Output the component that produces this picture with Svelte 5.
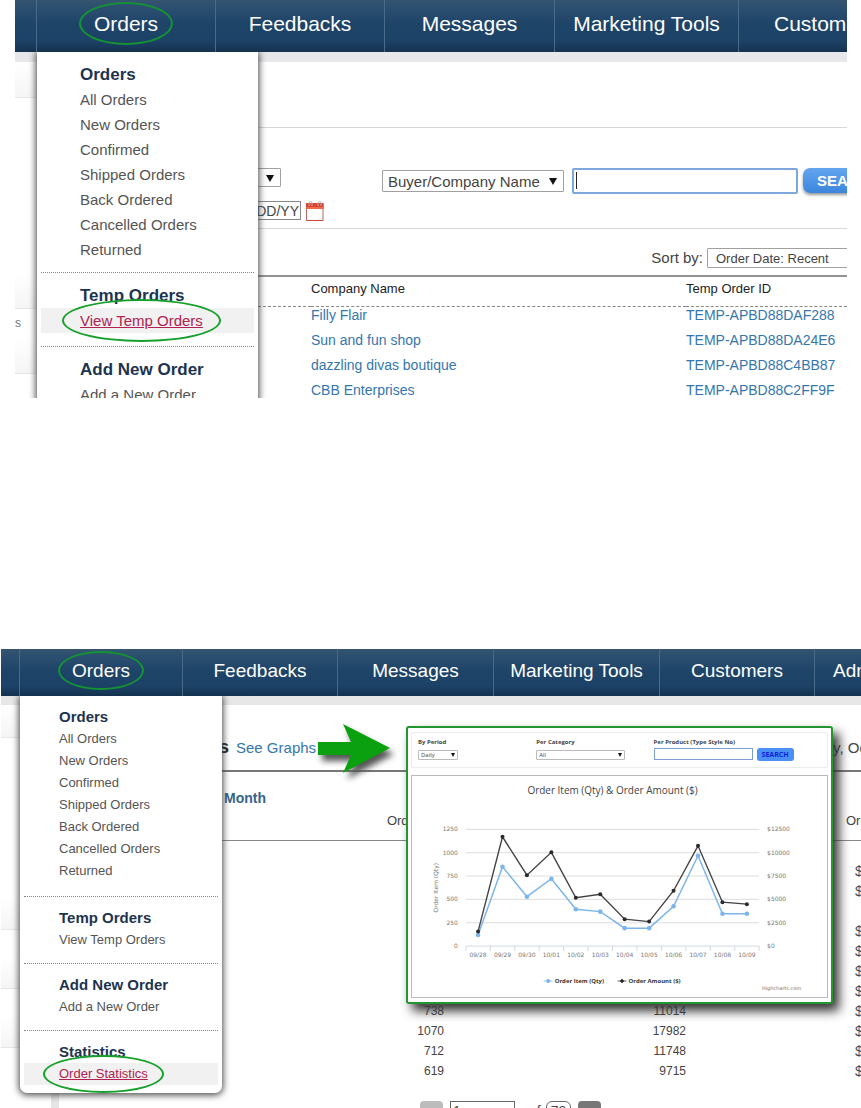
<script>
	const orderLinks = ["All Orders", "New Orders", "Confirmed", "Shipped Orders", "Back Ordered", "Cancelled Orders", "Returned"];

	const tempMenu = [
		{ title: "Orders", links: orderLinks },
		{ title: "Temp Orders", links: ["View Temp Orders"] },
		{ title: "Add New Order", links: ["Add a New Order"] },
	];
	const statsMenu = [...tempMenu, { title: "Statistics", links: ["Order Statistics"] }];

	const tempOrders = [
		{ company: "Filly Flair", id: "TEMP-APBD88DAF288" },
		{ company: "Sun and fun shop", id: "TEMP-APBD88DA24E6" },
		{ company: "dazzling divas boutique", id: "TEMP-APBD88C4BB87" },
		{ company: "CBB Enterprises", id: "TEMP-APBD88C2FF9F" },
	];

	const stats = [
		["", "", "$"],
		["", "", "$"],
		["", "", ""],
		["", "", "$"],
		["", "", "$"],
		["", "", "$"],
		["", "", "$"],
		["738", "11014", "$"],
		["1070", "17982", "$"],
		["712", "11748", "$"],
		["619", "9715", "$"],
	];

	const days = ["09/28", "09/29", "09/30", "10/01", "10/02", "10/03", "10/04", "10/05", "10/06", "10/07", "10/08", "10/09"];
	const qty = [118, 850, 529, 721, 395, 369, 192, 192, 427, 967, 347, 347];
	const amount = [1550, 11700, 7590, 10040, 5180, 5550, 2880, 2620, 5930, 10740, 4700, 4490];
	const steps = [0, 1, 2, 3, 4, 5];

	const gridX = (i) => 54 + i * 24.5;
	const pointX = (i) => gridX(i) + 12.2;
	const valueY = (v) => 170.5 - (v / 250) * 23.4;
	const line = (values) => values.map((v, i) => `${pointX(i)},${valueY(v)}`).join(" ");
</script>

{#snippet nav(items)}
	<nav class="nav">
		<span></span>
		{#each items as item, i}
			<a href="#{item}"><span class:ring={i === 0}>{item}</span></a>
		{/each}
	</nav>
{/snippet}

{#snippet menu(groups, active)}
	<div class="menu">
		{#each groups as group}
			<section>
				<h3>{group.title}</h3>
				<ul>
					{#each group.links as link}
						<li class:active={link === active}>
							<a href="#{link}" class:ring={link === active}>{link}</a>
						</li>
					{/each}
				</ul>
			</section>
		{/each}
	</div>
{/snippet}

<main>
	<div class="screen temp">
		{@render nav(["Orders", "Feedbacks", "Messages", "Marketing Tools", "Customers"])}
		<div class="shell">
			<aside>
				<div class="tab"></div>
				<div class="space"></div>
				<div class="tab"></div>
				<div class="entry">s</div>
				<div class="tab"></div>
			</aside>
			<div class="content">
				<div class="blank"></div>
				<form class="search">
					<div class="filters">
						<span class="pick small"><select aria-label="Period"><option></option></select></span>
						<div class="date">
							<input type="text" aria-label="Date" value="MM/DD/YY" />
							<svg width="18" height="20" viewBox="0 0 18 20" aria-hidden="true">
								<rect x="0.5" y="3" width="16.5" height="16.5" fill="#fff" stroke="#b56a62" />
								<rect x="0" y="2" width="17.5" height="6" fill="#dc4330" />
								<rect x="0" y="6" width="17.5" height="2" fill="#ef6b4d" />
								<path d="M3 5V2a1.500 1.500 0 0 1 3 0V5M12 5V2a1.500 1.500 0 0 1 3 0V5" fill="none" stroke="#b4b4b4" />
								<path d="M1 19.5h16" stroke="#d0453a" />
							</svg>
						</div>
					</div>
					<div class="query">
						<span class="pick"><select aria-label="Search field"><option>Buyer/Company Name</option></select></span>
						<input type="text" aria-label="Search text" />
						<button type="button">SEARCH</button>
					</div>
				</form>
				<div class="sort">
					<label for="sort">Sort by:</label>
					<select id="sort"><option>Order Date: Recent</option></select>
				</div>
				<table>
					<colgroup><col class="lead" /><col class="company" /><col /></colgroup>
					<thead>
						<tr><th></th><th>Company Name</th><th>Temp Order ID</th></tr>
					</thead>
					<tbody>
						{#each tempOrders as order}
							<tr>
								<td></td>
								<td><a href="#{order.id}">{order.company}</a></td>
								<td><a href="#{order.id}">{order.id}</a></td>
							</tr>
						{/each}
					</tbody>
				</table>
			</div>
		</div>
		{@render menu(tempMenu, "View Temp Orders")}
	</div>

	<div class="screen stats">
		{@render nav(["Orders", "Feedbacks", "Messages", "Marketing Tools", "Customers", "Admin"])}
		<div class="shell">
			<aside>
				<div class="tab"></div>
				<div class="space"></div>
				<div class="tab"></div>
				<div class="entry"></div>
				<div class="tab"></div>
				<div class="entry"></div>
				<div class="tab"></div>
			</aside>
			<div class="content">
				<header>
					<h2>s</h2>
					<a href="#graphs">See Graphs</a>
					<time>y, Oct</time>
				</header>
				<h4>Month</h4>
				<table>
					<colgroup><col class="qty" /><col class="total" /><col /></colgroup>
					<thead>
						<tr><th>Order Qty</th><th></th><th>Order</th></tr>
					</thead>
					<tbody>
						{#each stats as row}
							<tr>
								{#each row as cell}
									<td>{cell}</td>
								{/each}
							</tr>
						{/each}
					</tbody>
				</table>
				<div class="pager">
					<button type="button" class="prev" aria-label="Previous page">◀</button>
					<input type="text" aria-label="Page" value="1" />
					<span class="of">of</span>
					<span class="pages">78</span>
					<button type="button" class="next" aria-label="Next page">▶</button>
				</div>
			</div>
		</div>
		{@render menu(statsMenu, "Order Statistics")}

		<svg class="arrow" width="90" height="70" viewBox="0 0 90 70" aria-hidden="true">
			<path d="M0 18H33L25 0L72 24L25 49L33 31H0Z" fill="#0aa00f" />
		</svg>

		<div class="card">
			<form class="bar">
				<div>
					<label for="period">By Period</label>
					<span class="pick period"><select id="period"><option>Daily</option></select></span>
				</div>
				<div>
					<label for="category">Per Category</label>
					<span class="pick category"><select id="category"><option>All</option></select></span>
				</div>
				<div>
					<label for="product">Per Product (Type Style No)</label>
					<div class="product">
						<input id="product" type="text" />
						<button type="button">SEARCH</button>
					</div>
				</div>
			</form>
			<div class="chart">
				<svg viewBox="0 0 416 222" role="img" aria-label="Order Item and Order Amount">
					<text class="title" x="201" y="18">Order Item (Qty) &amp; Order Amount ($)</text>
					{#each steps as s}
						<path d="M54 {valueY(s * 250)}H348" stroke={s ? "#d4d4d4" : "#c6cfdc"} />
						<text class="left" x="46" y={valueY(s * 250) + 2}>{s * 250}</text>
						<text class="right" x="356" y={valueY(s * 250) + 2}>${s * 2500}</text>
					{/each}
					{#each days as day, i}
						<path d="M{gridX(i)} 170.5v5" stroke="#c6cfdc" />
						<text class="day" x={pointX(i)} y="181">{day}</text>
					{/each}
					<path d="M348 170.5v5" stroke="#c6cfdc" />
					<text class="axis" transform="translate(26 112) rotate(-90)">Order Item (Qty)</text>

					<polyline points={line(qty)} fill="none" stroke="#7cb5ec" stroke-width="1.5" />
					{#each qty as v, i}
						<circle cx={pointX(i)} cy={valueY(v)} r="2.3" fill="#7cb5ec" />
					{/each}
					<polyline points={line(amount.map((v) => v / 10))} fill="none" stroke="#434348" stroke-width="1.4" />
					{#each amount as v, i}
						<circle cx={pointX(i)} cy={valueY(v / 10)} r="2" fill="#2a2a2e" />
					{/each}

					<path d="M132 205.5h9" stroke="#7cb5ec" />
					<circle cx="136.5" cy="205.5" r="2" fill="#7cb5ec" />
					<text class="legend" x="143" y="208">Order Item (Qty)</text>
					<path d="M206 205.5h9" stroke="#434348" />
					<path d="M210.5 203.3l2.2 2.2-2.2 2.2-2.2-2.2z" fill="#222" />
					<text class="legend" x="217" y="208">Order Amount ($)</text>
					<text class="credit" x="390" y="215">Highcharts.com</text>
				</svg>
			</div>
		</div>
	</div>
</main>

<style>
	:global(body) {
		background: #fff;
	}

	main {
		display: flex;
		flex-direction: column;
		height: 100vh;
		overflow: hidden;
		font-family: "Liberation Sans", Arial, sans-serif;
		color: #444;
	}

	.screen {
		position: relative;
		overflow: hidden;
	}

	.temp {
		--nav: 52px;
		--nav-font: 21px;
		--row: 25px;
		--title: 17px;
		--link: 15px;
		--indent: 39px;
		--ring: -9px -18px;
		--nav-ring: -10px -15px;
		flex: none;
		margin: 0 14px 251px 15px;
	}

	.stats {
		--nav: 47px;
		--nav-font: 19px;
		--row: 22px;
		--title: 15px;
		--link: 13px;
		--indent: 35px;
		--ring: -8px -16px;
		--nav-ring: -8px -14px;
		flex: 1;
		margin-left: 1px;
	}

	a {
		color: #3576ad;
		text-decoration: none;
	}

	h2,
	h3,
	h4,
	ul {
		margin: 0;
		padding: 0;
		list-style: none;
	}

	input,
	select,
	button {
		box-sizing: border-box;
		margin: 0;
		font-family: inherit;
		color: #444;
	}

	/* navigation */
	.nav {
		display: grid;
		height: var(--nav);
		background: linear-gradient(#35546f 0, #2a4e6f 18%, #1e4468 45%, #1d4267 78%, #14324f 100%);
	}

	.temp .nav {
		grid-template-columns: 21fr 179fr 169fr 170fr 184fr 109fr;
	}

	.stats .nav {
		grid-template-columns: 18fr 163fr 155fr 156fr 166fr 155fr 47fr;
	}

	.nav a {
		min-width: 0;
		border-left: 1px solid #4a6a89;
		color: #fff;
		font-size: var(--nav-font);
		line-height: calc(var(--nav) - 4px);
		text-align: center;
		white-space: nowrap;
	}

	.temp .nav a:last-child {
		padding-left: 35px;
		text-align: left;
	}

	.stats .nav a:last-child {
		padding-left: 18px;
		text-align: left;
	}

	.nav a span {
		display: inline-block;
		line-height: 23px;
	}

	.ring {
		position: relative;
	}

	.ring::after {
		content: "";
		position: absolute;
		inset: var(--ring);
		border: 2px solid #17a02c;
		border-radius: 50%;
	}

	.nav .ring::after {
		inset: var(--nav-ring);
		border-color: #149335;
	}

	/* drop-down menu */
	.menu {
		position: absolute;
		top: var(--nav);
		left: 22px;
		width: 213px;
		padding: 0 4px 8px;
		background: #fff;
		border-radius: 0 0 7px 7px;
		box-shadow: 0 1px 7px 1px #444;
		clip-path: inset(0 -20px -20px -20px);
	}

	.stats .menu {
		left: 19px;
		width: 194px;
		padding-bottom: 8px;
	}

	.menu section {
		padding: 10px 0 13px;
	}

	.menu section:first-child {
		padding-bottom: 10px;
	}

	.stats .menu section {
		padding-bottom: 12px;
	}

	.stats .menu section:first-child {
		padding-bottom: 14px;
	}

	.menu section:last-child,
	.stats .menu section:last-child {
		padding-bottom: 0;
	}

	.menu section + section {
		border-top: 1px dotted #888;
	}

	.menu h3 {
		padding-left: var(--indent);
		color: #1d3450;
		font-size: var(--title);
		line-height: var(--row);
	}

	.menu li {
		padding-left: var(--indent);
		font-size: var(--link);
		line-height: var(--row);
	}

	.menu a {
		display: inline-block;
		color: #555;
	}

	.menu .active {
		background: #f1f1f1;
	}

	.menu .active a {
		color: #b0224f;
		text-decoration: underline;
	}

	/* page frame */
	.shell {
		display: grid;
		grid-template-columns: 58px minmax(0, 1fr);
		border-top: 10px solid #e8e8ea;
	}

	.stats .shell {
		border-top-width: 9px;
		border-top-color: #e7e7e7;
	}

	aside {
		border-right: 8px solid #e6e6e6;
		font-size: 12px;
		color: #777;
	}

	.tab {
		height: 35px;
		border-bottom: 1px solid #e6e6e6;
		background: linear-gradient(#fff, #f5f5f5);
	}

	.space {
		height: 175px;
	}

	.entry {
		height: 29px;
		line-height: 29px;
	}

	.stats .tab {
		height: 32px;
	}

	.stats .space {
		height: 159px;
	}

	.stats .entry {
		height: 26px;
	}

	table {
		width: 100%;
		table-layout: fixed;
		border-collapse: separate;
		border-spacing: 0;
	}

	th,
	td {
		padding: 0;
		font-weight: normal;
		text-align: left;
		white-space: nowrap;
	}

	/* temp orders */
	.blank {
		height: 65px;
		border-bottom: 1px solid #d8d8d8;
	}

	.search {
		display: flex;
		gap: 58px;
		padding: 40px 0 7px 154px;
		border-bottom: 1px solid #d8d8d8;
	}

	.filters {
		display: grid;
		flex: none;
		gap: 14px;
	}

	.pick {
		position: relative;
		display: inline-block;
	}

	.pick::after {
		content: "";
		position: absolute;
		top: calc(50% - 3px);
		right: 7px;
		border: 4px solid transparent;
		border-top: 7px solid #111;
		border-bottom: 0;
		pointer-events: none;
	}

	select {
		appearance: none;
		height: 22px;
		padding: 0 5px;
		border: 1px solid #a0a0a0;
		border-radius: 1px;
		background: #fff;
		font-size: 15px;
	}

	.pick select {
		width: 100%;
	}

	.small {
		width: 54px;
		height: 19px;
	}

	.small select {
		display: block;
		height: 19px;
	}

	.date {
		display: flex;
		gap: 5px;
	}

	.date input {
		width: 74px;
		height: 19px;
		padding: 0 1px;
		border: 1px solid #888;
		font-size: 14px;
	}

	.query {
		display: flex;
		flex: 1;
		align-items: flex-start;
	}

	.query .pick {
		flex: none;
		width: 182px;
		margin: 2px 8px 0 0;
	}

	.query .pick select {
		display: block;
	}

	.query input {
		flex: none;
		width: 226px;
		height: 26px;
		border: 2px solid #7fa6dd;
		border-radius: 2px;
		background: linear-gradient(#222, #222) 2px 2px / 1px 17px no-repeat #fff;
	}

	.query button {
		flex: none;
		height: 25px;
		margin-left: 5px;
		padding: 0 14px;
		border: 0;
		border-radius: 7px;
		background: linear-gradient(#63a5ee, #3b86dc);
		box-shadow: 0 2px 3px #999;
		color: #fff;
		font-size: 15px;
		font-weight: bold;
	}

	.sort {
		display: flex;
		justify-content: flex-end;
		gap: 4px;
		margin-right: -2px;
		padding: 19px 0 7px;
		font-size: 15px;
		line-height: 20px;
	}

	.sort select {
		width: 142px;
		height: 20px;
		padding: 0 8px;
		font-size: 13px;
	}

	.lead {
		width: 238px;
	}

	.company {
		width: 375px;
	}

	.temp table {
		border-top: 2px solid #929292;
	}

	.temp th {
		padding-bottom: 5px;
		border-bottom: 1px dashed #888;
		color: #222;
		font-size: 13px;
		line-height: 24px;
	}

	.temp td {
		padding-bottom: 9px;
		font-size: 14px;
		line-height: 16px;
	}

	.temp tr:last-child td {
		padding-bottom: 0;
	}

	/* statistics */
	.stats header {
		display: flex;
		align-items: center;
		gap: 7px;
		padding: 30px 0 10px 160px;
		border-bottom: 2px solid #777;
		line-height: 25px;
		white-space: nowrap;
	}

	.stats header h2 {
		color: #222;
		font-size: 18px;
	}

	.stats header a {
		font-size: 15px;
	}

	time {
		width: 28px;
		margin-left: auto;
		font-size: 15px;
	}

	h4 {
		padding: 16px 0 0 165px;
		color: #35648c;
		font-size: 14px;
		line-height: 20px;
	}

	.qty {
		width: 385px;
	}

	.total {
		width: 242px;
	}

	.stats th {
		padding-bottom: 6px;
		border-bottom: 1px solid #888;
		font-size: 13px;
		line-height: 26px;
		text-align: right;
	}

	.stats td {
		font-size: 12px;
		line-height: 20px;
		height: 20px;
		text-align: right;
	}

	.stats tbody::before {
		content: "";
		display: block;
		height: 20px;
	}

	.stats th:last-child {
		padding-left: 160px;
		text-align: left;
	}

	.stats td:last-child {
		padding-left: 169px;
		color: #3d4a66;
		font-size: 14px;
		text-align: left;
	}

	.pager {
		display: flex;
		align-items: flex-start;
		padding: 20px 0 10px 361px;
		font-size: 14px;
		line-height: 20px;
	}

	.pager button {
		width: 23px;
		height: 20px;
		padding: 0;
		border: 0;
		border-radius: 4px;
		color: #fff;
		font-size: 10px;
	}

	.prev {
		background: #bcbcbc;
	}

	.next {
		background: #777;
	}

	.pager input {
		width: 65px;
		height: 20px;
		margin: 0 14px 0 7px;
		border: 1px solid #666;
		font-size: 14px;
	}

	.pages {
		margin: 0 7px 0 5px;
		padding: 0 4px;
		border: 1px solid #666;
		border-radius: 6px;
		line-height: 18px;
	}

	.arrow {
		position: absolute;
		top: 75px;
		left: 317px;
		filter: drop-shadow(4px 6px 3px #555);
	}

	/* chart card laid over the statistics table */
	.card {
		position: absolute;
		top: 77px;
		left: 405px;
		right: 28px;
		padding: 4px 3px;
		border: 2px solid #22962f;
		border-radius: 3px;
		background: #fff;
		box-shadow: 6px 7px 11px #333;
		font-family: "Open Sans", sans-serif;
	}

	.bar {
		display: grid;
		grid-template-columns: 118fr 117fr 173fr;
		padding: 3px 0 6px 6px;
		border: 1px solid #ececec;
		border-radius: 2px;
		font-size: 6px;
		line-height: 12px;
	}

	.bar label {
		display: block;
		color: #444;
		font-weight: 700;
	}

	.bar select,
	.bar input {
		display: block;
		height: 10px;
		padding: 0 2px;
		border: 1px solid #bbb;
		font-size: 6px;
		line-height: 8px;
	}

	.bar .pick {
		display: block;
		margin-top: 2px;
	}

	.bar .pick::after {
		top: 3px;
		right: 3px;
		border-width: 4px 2px 0;
	}

	.period {
		width: 40px;
	}

	.category {
		width: 89px;
	}

	.product {
		display: flex;
		gap: 4px;
	}

	.bar .product input {
		width: 99px;
		height: 12px;
		border: 1px solid #7d9fd0;
	}

	.bar button {
		width: 37px;
		height: 13px;
		padding: 0;
		border: 0;
		border-radius: 3px;
		background: #4a90f5;
		color: #0a1fd8;
		font-size: 7px;
		font-weight: bold;
		line-height: 12px;
	}

	.chart {
		margin-top: 7px;
		border: 1px solid #bdb8bc;
	}

	.chart svg {
		display: block;
		width: 100%;
	}

	.chart path {
		stroke-width: 0.8;
	}

	.chart text {
		fill: #777;
		font-family: "DejaVu Sans", sans-serif;
		font-size: 6px;
	}

	.chart .title {
		fill: #444;
		font-family: "Open Sans", sans-serif;
		font-size: 10px;
		text-anchor: middle;
	}

	.chart .left {
		text-anchor: end;
	}

	.chart .day,
	.chart .axis {
		text-anchor: middle;
	}

	.chart .legend {
		fill: #333;
		font-family: "Open Sans", sans-serif;
		font-weight: 700;
	}

	.chart .credit {
		font-size: 5px;
		text-anchor: end;
	}
</style>
